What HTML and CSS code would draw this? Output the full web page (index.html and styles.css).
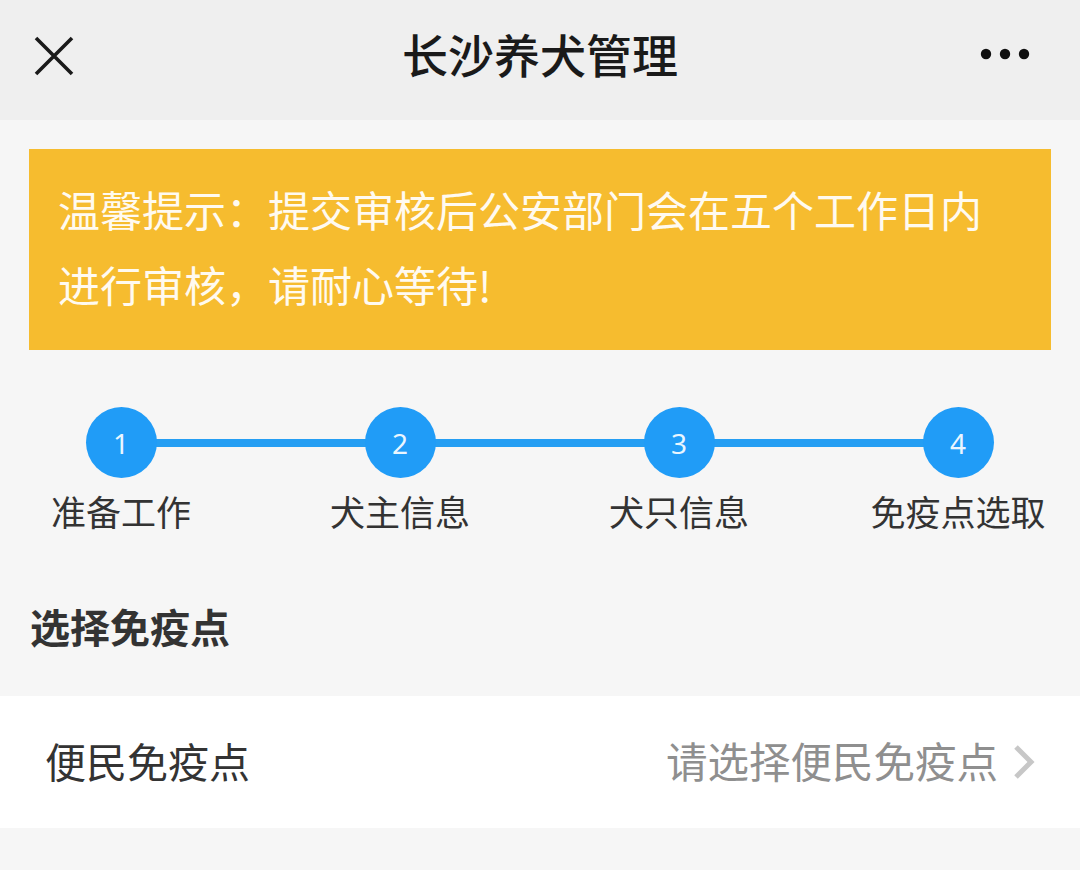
FILE: index.html
```html
<!DOCTYPE html>
<html lang="zh-CN">
<head>
<meta charset="utf-8">
<title>长沙养犬管理</title>
<link rel="stylesheet" href="styles.css">
</head>
<body>
<header class="topbar">
  <span class="icon-close">
    <svg width="40" height="40" viewBox="0 0 40 40"><path d="M2 2 L38 38 M38 2 L2 38" stroke="#1a1a1a" stroke-width="3.6" fill="none"/></svg>
  </span>
  <h1 class="title">长沙养犬管理</h1>
  <span class="icon-more">
    <svg width="50" height="12" viewBox="0 0 50 12"><circle cx="6" cy="6" r="5.2" fill="#111"/><circle cx="25" cy="6" r="5.2" fill="#111"/><circle cx="44" cy="6" r="5.2" fill="#111"/></svg>
  </span>
</header>
<main class="content">
  <div class="notice">温馨提示：提交审核后公安部门会在五个工作日内进行审核，请耐心等待!</div>
  <div class="steps">
    <div class="step"><span class="dot">1</span><span class="label">准备工作</span></div>
    <div class="step"><span class="dot">2</span><span class="label">犬主信息</span></div>
    <div class="step"><span class="dot">3</span><span class="label">犬只信息</span></div>
    <div class="step"><span class="dot">4</span><span class="label">免疫点选取</span></div>
  </div>
  <h2 class="section-title">选择免疫点</h2>
  <div class="row">
    <span class="row-label">便民免疫点</span>
    <span class="row-value">请选择便民免疫点
      <svg class="chev" width="24" height="38" viewBox="0 0 24 38"><path d="M4 4 L19 19 L4 34" stroke="#c7c7c7" stroke-width="5" fill="none"/></svg>
    </span>
  </div>
</main>
</body>
</html>
```

FILE: styles.css
```css
* { box-sizing: border-box; }
html, body { margin: 0; padding: 0; }
body {
  width: 1080px;
  height: 870px;
  background: #f6f6f6;
  font-family: "Noto Sans CJK SC", "Noto Sans", sans-serif;
  color: #333;
  overflow: hidden;
}
.topbar {
  height: 120px;
  background: #efefef;
  display: grid;
  grid-template-columns: 1fr auto 1fr;
  align-items: center;
  padding: 0 50px 14px 34px;
}
.icon-close { display: flex; width: 40px; height: 40px; margin-top: 6px; justify-self: start; }
.icon-more { display: flex; width: 50px; height: 12px; margin-top: 2px; justify-self: end; }
.title {
  margin: 0 0 0 16px;
  font-size: 46px;
  font-weight: 500;
  color: #1a1a1a;
  line-height: 1;
}
.content { padding: 29px 29px 0; }
.notice {
  background: #f6bc2f;
  color: #fffaf0;
  font-size: 42px;
  line-height: 75px;
  padding: 22px 40px 29px 29px;
  min-height: 201px;
}
.steps {
  position: relative;
  display: flex;
  gap: 99px;
  margin: 57px 0 0 2px;
}
.steps::before {
  content: "";
  position: absolute;
  left: 92px;
  right: 93px;
  top: 32px;
  height: 8px;
  background: #259ef3;
}
.step {
  position: relative;
  width: 180px;
  display: flex;
  flex-direction: column;
  align-items: center;
}
.dot {
  width: 71px;
  height: 71px;
  border-radius: 50%;
  background: #209cf7;
  color: #eaf6ff;
  display: flex;
  align-items: center;
  justify-content: center;
  font-family: "Noto Sans", "Open Sans", sans-serif;
  font-size: 28px;
}
.label {
  margin-top: 11px;
  font-size: 35px;
  line-height: 44px;
  color: #333;
  white-space: nowrap;
}
.section-title {
  margin: 67px 0 0 1px;
  font-size: 40px;
  line-height: 52px;
  font-weight: 700;
  color: #333;
}
.row {
  margin: 44px -29px 0;
  height: 132px;
  background: #fff;
  display: flex;
  align-items: center;
  justify-content: space-between;
  padding: 0 44px 5px 45px;
}
.row-label { font-size: 41px; color: #333; }
.row-value {
  display: flex;
  align-items: center;
  font-size: 41.5px;
  color: #8f8f8f;
}
.chev { margin-left: 14px; margin-top: 4px; }
```
